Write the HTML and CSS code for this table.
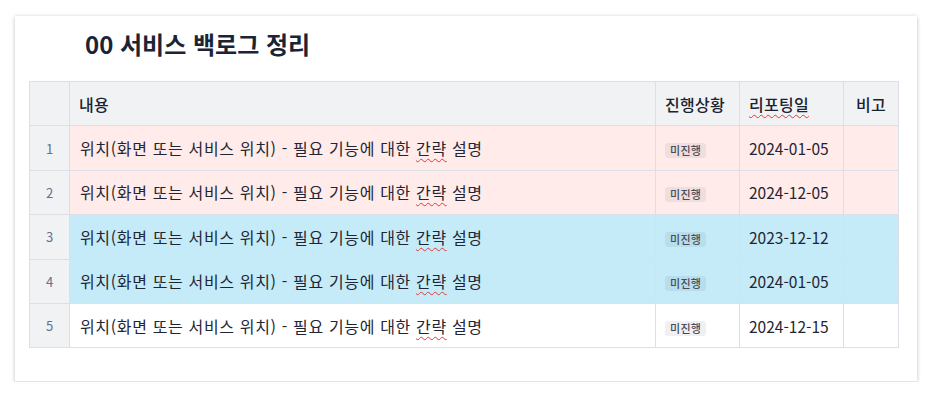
FILE: index.html
```html
<!DOCTYPE html>
<html lang="ko">
<head>
<meta charset="utf-8">
<link rel="stylesheet" href="styles.css">
</head>
<body>
<div class="card">
  <h1 class="title">00 서비스 백로그 정리</h1>
  <table class="grid">
    <colgroup>
      <col class="c-num"><col class="c-text"><col class="c-status"><col class="c-date"><col class="c-note">
    </colgroup>
    <thead>
      <tr><th></th><th>내용</th><th>진행상황</th><th><span class="typo">리포팅일</span></th><th class="center">비고</th></tr>
    </thead>
    <tbody>
      <tr class="pink"><td class="num">1</td><td class="txt">위치(화면 또는 서비스 위치) - 필요 기능에 대한 <span class="typo">간략</span> 설명</td><td><span class="badge">미진행</span></td><td class="date">2024-01-05</td><td></td></tr>
      <tr class="pink"><td class="num">2</td><td class="txt">위치(화면 또는 서비스 위치) - 필요 기능에 대한 <span class="typo">간략</span> 설명</td><td><span class="badge">미진행</span></td><td class="date">2024-12-05</td><td></td></tr>
      <tr class="blue"><td class="num">3</td><td class="txt">위치(화면 또는 서비스 위치) - 필요 기능에 대한 <span class="typo">간략</span> 설명</td><td><span class="badge">미진행</span></td><td class="date">2023-12-12</td><td></td></tr>
      <tr class="blue"><td class="num">4</td><td class="txt">위치(화면 또는 서비스 위치) - 필요 기능에 대한 <span class="typo">간략</span> 설명</td><td><span class="badge">미진행</span></td><td class="date">2024-01-05</td><td></td></tr>
      <tr><td class="num">5</td><td class="txt">위치(화면 또는 서비스 위치) - 필요 기능에 대한 <span class="typo">간략</span> 설명</td><td><span class="badge">미진행</span></td><td class="date">2024-12-15</td><td></td></tr>
    </tbody>
  </table>
</div>
</body>
</html>
```

FILE: styles.css
```css
html, body {
  margin: 0;
  padding: 0;
  background: #ffffff;
}
body {
  padding: 16px 16px 0 15px;
  font-family: "Noto Sans CJK KR", "Noto Sans", sans-serif;
  color: #1f2633;
}
.card {
  width: 902px;
  height: 366px;
  box-sizing: border-box;
  background: #fff;
  box-shadow: 0 0 4px rgba(0, 0, 0, 0.14), 0 2px 4px rgba(0, 0, 0, 0.12);
  border-bottom: 1px solid #e4e4e4;
  padding: 0 19px 0 14px;
  overflow: hidden;
}
.title {
  margin: 0;
  padding: 11px 0 0 56px;
  height: 65px;
  box-sizing: border-box;
  font-size: 24px;
  font-weight: 700;
  line-height: 34px;
  color: #1b2436;
}
.grid {
  width: 869px;
  border-collapse: collapse;
  table-layout: fixed;
  font-size: 16px;
  letter-spacing: 0.65px;
}
.c-num { width: 40px; }
.c-text { width: 586px; }
.c-status { width: 84px; }
.c-date { width: 104px; }
.c-note { width: 55px; }
.grid th, .grid td {
  border: 1px solid #dcdfe5;
  height: 43.4px;
  padding: 0 9px;
  text-align: left;
  white-space: nowrap;
  overflow: hidden;
}
.grid th {
  background: #f1f2f4;
  font-weight: 500;
  color: #1b2333;
  font-size: 16px;
  letter-spacing: 0.3px;
}
.grid th.center { text-align: center; padding: 0; }
.grid td.num {
  background: #f1f2f4;
  text-align: center;
  color: #647188;
  font-size: 13px;
  padding: 0;
  letter-spacing: 0;
}
.grid td.txt { padding-left: 10px; }
.grid td.date { letter-spacing: 0; font-size: 15.5px; }
tr.pink td:not(.num) { background: #ffebe9; }
tr.blue td:not(.num) { background: #c5ebf9; }
.badge {
  display: inline-block;
  font-size: 11px;
  line-height: 15px;
  padding: 0 5px;
  border-radius: 3px;
  background: rgba(60, 70, 90, 0.08);
  color: #454d5c;
  font-weight: 500;
  letter-spacing: 0.3px;
}
.typo {
  text-decoration: underline wavy #e53935;
  text-decoration-thickness: 1px;
  text-underline-offset: 3px;
}
```
